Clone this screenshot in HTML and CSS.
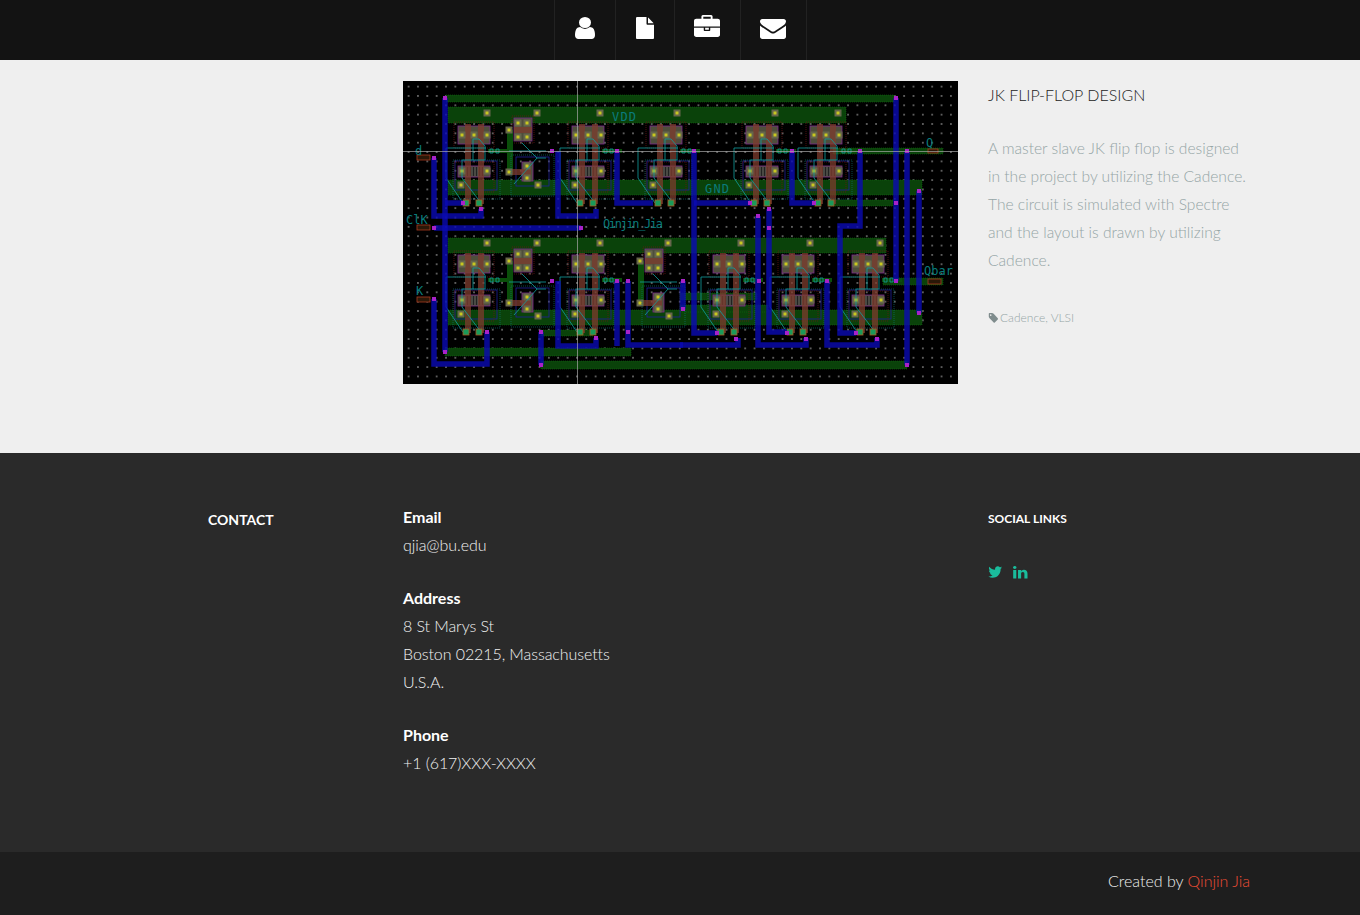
FILE: index.html
```html
<!DOCTYPE html>
<html lang="en">
<head>
    <meta charset="UTF-8">
    <meta name="viewport" content="width=device-width, initial-scale=1.0">
    <title>JK Flip-Flop Design</title>
    <link rel="stylesheet" href="styles.css">
</head>
<body>

    <header class="topbar">
        <nav class="nav">
            <a class="nav-item" href="#"><svg class="nav-icon icon-user" viewBox="256 128 1280 1536" preserveAspectRatio="none"><path d="M1536 1399q0 109-62.5 187t-150.5 78h-854q-88 0-150.5-78t-62.5-187q0-85 8.5-160.5t31.5-152 58.5-131 94-89 134.5-34.5q131 128 313 128t313-128q76 0 134.5 34.5t94 89 58.5 131 31.5 152 8.5 160.5zm-256-887q0 159-112.5 271.5t-271.5 112.5-271.5-112.5-112.5-271.5 112.5-271.5 271.5-112.5 271.5 112.5 112.5 271.5z"/></svg></a>
            <a class="nav-item" href="#"><svg class="nav-icon icon-file" viewBox="128 0 1536 1792" preserveAspectRatio="none"><path d="M1152 512v-472q22 14 36 28l408 408q14 14 28 36h-472zm-128 32q0 40 28 68t68 28h544v1056q0 40-28 68t-68 28h-1344q-40 0-68-28t-28-68v-1600q0-40 28-68t68-28h800v544z"/></svg></a>
            <a class="nav-item" href="#"><svg class="nav-icon icon-briefcase" viewBox="0 0 1792 1536" preserveAspectRatio="none"><path d="M640 256h512v-128h-512v128zm1152 640v480q0 66-47 113t-113 47h-1472q-66 0-113-47t-47-113v-480h672v160q0 26 19 45t45 19h320q26 0 45-19t19-45v-160h672zm-768 0v128h-256v-128h256zm768-480v384h-1792v-384q0-66 47-113t113-47h352v-160q0-40 28-68t68-28h576q40 0 68 28t28 68v160h352q66 0 113 47t47 113z"/></svg></a>
            <a class="nav-item" href="#"><svg class="nav-icon icon-envelope" viewBox="0 256 1792 1408" preserveAspectRatio="none"><path d="M1792 710v794q0 66-47 113t-113 47h-1472q-66 0-113-47t-47-113v-794q44 49 101 87 362 246 497 345 57 42 92.5 65.5t94.5 48 110 24.5h2q51 0 110-24.5t94.5-48 92.5-65.5q170-123 498-345 57-39 100-87zm0-294q0 79-49 151t-122 123q-376 261-468 325-10 7-42.5 30.5t-54 38-52 32.5-57.5 27-50 9h-2q-23 0-50-9t-57.5-27-52-32.5-54-38-42.5-30.5q-91-64-262-182.5t-205-142.5q-62-42-117-115.5t-55-136.5q0-78 41.5-130t118.5-52h1472q65 0 112.5 47t47.5 113z"/></svg></a>
        </nav>
    </header>

    <main class="project">
        <div class="wrap project-grid">
            <svg class="layout" viewBox="0 0 555 303" role="img" aria-label="Cadence layout of the flip-flop">
                <defs>
                    <pattern id="dots" width="9.35" height="9.35" patternUnits="userSpaceOnUse">
                        <rect x="5" y="5" width="1.2" height="1.2" fill="#e0e0e0"/>
                    </pattern>
                    <pattern id="hatch" width="3" height="3" patternUnits="userSpaceOnUse">
                        <rect width="3" height="3" fill="#4a4a44"/>
                        <rect width="1" height="3" fill="#222"/>
                    </pattern>
                    <g id="contact">
                        <rect x="-3.5" y="-3.5" width="7" height="7" fill="#66664c"/>
                        <rect x="-1.5" y="-1.5" width="3" height="3" fill="#c8c820"/>
                    </g>
                    <g id="cell">
                        <rect class="well" x="-4" y="-2" width="40" height="26"/>
                        <rect class="box-blue" x="-3" y="37" width="42" height="29"/>
                        <rect class="well" x="-4" y="38" width="40" height="30"/>
                        <rect class="diff" x="0" y="2" width="32" height="18"/>
                        <rect class="diff" x="0" y="42" width="32" height="11"/>
                        <rect x="7" y="43" width="19" height="9" fill="url(#hatch)"/>
                        <rect class="gate" x="7" y="0" width="6" height="80"/>
                        <rect class="gate" x="20" y="0" width="6" height="80"/>
                        <use href="#contact" x="4" y="11"/>
                        <use href="#contact" x="16" y="11"/>
                        <use href="#contact" x="29" y="11"/>
                        <use href="#contact" x="4" y="47"/>
                        <use href="#contact" x="29" y="47"/>
                        <use href="#contact" x="3" y="61"/>
                        <rect class="rail" x="30" y="25" width="20" height="4"/>
                        <path class="trace" d="M-12 24H28M-12 24V54L5 79M15 15H21L27 22V36H4V54L23 79M15 15V36"/>
                        <path class="trace-dot" d="M-5 36H42V75H-5Z"/>
                        <path class="trace" d="M32 25h3v4h-3zM38 25h3v4h-3z"/>
                        <rect class="pin" x="5" y="76" width="6" height="6"/>
                        <rect class="pin" x="18" y="76" width="6" height="6"/>
                    </g>
                    <g id="tgate">
                        <rect class="well" x="-2" y="-2" width="22" height="27"/>
                        <rect class="box-blue" x="2" y="39" width="33" height="29"/>
                        <rect class="rail" x="-7" y="12" width="6" height="44"/>
                        <rect class="diff" x="0" y="0" width="18" height="23"/>
                        <rect class="diff" x="8" y="44" width="11" height="19"/>
                        <rect class="gate" x="0" y="9" width="18" height="6"/>
                        <rect class="gate" x="-3" y="51" width="20" height="6"/>
                        <use href="#contact" x="4" y="5"/>
                        <use href="#contact" x="13" y="5"/>
                        <use href="#contact" x="4" y="19"/>
                        <use href="#contact" x="13" y="19"/>
                        <use href="#contact" x="13" y="48"/>
                        <use href="#contact" x="13" y="60"/>
                        <use href="#contact" x="-5" y="12"/>
                        <use href="#contact" x="-5" y="54"/>
                        <use href="#contact" x="24" y="67"/>
                        <path class="trace" d="M8 25L23 40L0 66M23 40H32M-5 33H32"/>
                        <path class="trace-dot" d="M-3 37H40V78H-3Z"/>
                    </g>
                </defs>

                <rect width="555" height="303" fill="#000"/>
                <rect width="555" height="303" fill="url(#dots)"/>

                <g class="strips">
                    <rect x="43" y="14" width="448" height="7"/>
                    <rect x="45" y="26" width="398" height="16"/>
                    <rect x="45" y="99" width="474" height="15"/>
                    <rect x="45" y="157" width="438" height="15"/>
                    <rect x="45" y="229" width="474" height="15"/>
                    <rect x="42" y="267" width="186" height="8"/>
                    <rect x="138" y="280" width="366" height="8"/>
                    <rect x="138" y="249" width="52" height="6"/>
                    <rect x="277" y="212" width="77" height="7"/>
                    <rect x="277" y="224" width="88" height="7"/>
                    <rect x="427" y="119" width="63" height="6"/>
                    <rect x="430" y="67" width="110" height="6"/>
                    <rect x="480" y="197" width="60" height="7"/>
                </g>

                <use href="#contact" x="84" y="32"/>
                <use href="#contact" x="134" y="32"/>
                <use href="#contact" x="197" y="32"/>
                <use href="#contact" x="274" y="32"/>
                <use href="#contact" x="372" y="32"/>
                <use href="#contact" x="435" y="32"/>
                <use href="#contact" x="84" y="162"/>
                <use href="#contact" x="134" y="162"/>
                <use href="#contact" x="197" y="162"/>
                <use href="#contact" x="265" y="162"/>
                <use href="#contact" x="338" y="162"/>
                <use href="#contact" x="407" y="162"/>
                <use href="#contact" x="477" y="162"/>

                <use href="#cell" x="55" y="43"/>
                <use href="#cell" x="169" y="43"/>
                <use href="#cell" x="247" y="43"/>
                <use href="#cell" x="343" y="43"/>
                <use href="#cell" x="407" y="43"/>
                <use href="#tgate" x="111" y="37"/>

                <use href="#cell" x="55" y="172"/>
                <use href="#cell" x="169" y="172"/>
                <use href="#cell" x="310" y="172"/>
                <use href="#cell" x="379" y="172"/>
                <use href="#cell" x="449" y="172"/>
                <use href="#tgate" x="111" y="168"/>
                <use href="#tgate" x="242" y="168"/>

                <g class="wires">
                    <path d="M42 17V271"/>
                    <path d="M31 77V135H78V128"/>
                    <path d="M31 147H178"/>
                    <path d="M42 122H60"/>
                    <path d="M155 70V135H193V128"/>
                    <path d="M214 70V122H250"/>
                    <path d="M291 70V252H314"/>
                    <path d="M291 122H347"/>
                    <path d="M389 70V122H411"/>
                    <path d="M457 70V145H437V252H453"/>
                    <path d="M493 17V200"/>
                    <path d="M504 70V284"/>
                    <path d="M516 110V232"/>
                    <path d="M355 135V264H403V257"/>
                    <path d="M366 128V251H384"/>
                    <path d="M280 200V228"/>
                    <path d="M424 200V264H474V257"/>
                    <path d="M277 264H335V257"/>
                    <path d="M31 218V283H84V251"/>
                    <path d="M155 200V265H193V257"/>
                    <path d="M214 200V265"/>
                    <path d="M225 200V264H280"/>
                    <path d="M138 251V284"/>
                </g>

                <g class="vias">
                    <rect x="40" y="15" width="4" height="4"/>
                    <rect x="29" y="75" width="4" height="4"/>
                    <rect x="29" y="145" width="4" height="4"/>
                    <rect x="29" y="216" width="4" height="4"/>
                    <rect x="176" y="145" width="4" height="4"/>
                    <rect x="76" y="126" width="4" height="4"/>
                    <rect x="58" y="120" width="4" height="4"/>
                    <rect x="147" y="68" width="4" height="4"/>
                    <rect x="212" y="68" width="4" height="4"/>
                    <rect x="289" y="68" width="4" height="4"/>
                    <rect x="387" y="68" width="4" height="4"/>
                    <rect x="455" y="68" width="4" height="4"/>
                    <rect x="502" y="68" width="4" height="4"/>
                    <rect x="491" y="15" width="4" height="4"/>
                    <rect x="491" y="120" width="4" height="4"/>
                    <rect x="514" y="108" width="4" height="4"/>
                    <rect x="345" y="120" width="4" height="4"/>
                    <rect x="409" y="120" width="4" height="4"/>
                    <rect x="353" y="133" width="4" height="4"/>
                    <rect x="364" y="126" width="4" height="4"/>
                    <rect x="364" y="145" width="4" height="4"/>
                    <rect x="278" y="226" width="4" height="4"/>
                    <rect x="147" y="198" width="4" height="4"/>
                    <rect x="212" y="198" width="4" height="4"/>
                    <rect x="223" y="198" width="4" height="4"/>
                    <rect x="278" y="198" width="4" height="4"/>
                    <rect x="354" y="198" width="4" height="4"/>
                    <rect x="422" y="198" width="4" height="4"/>
                    <rect x="491" y="198" width="4" height="4"/>
                    <rect x="82" y="249" width="4" height="4"/>
                    <rect x="136" y="249" width="4" height="4"/>
                    <rect x="223" y="249" width="4" height="4"/>
                    <rect x="191" y="255" width="4" height="4"/>
                    <rect x="40" y="269" width="4" height="4"/>
                    <rect x="136" y="282" width="4" height="4"/>
                    <rect x="502" y="282" width="4" height="4"/>
                    <rect x="514" y="230" width="4" height="4"/>
                    <rect x="312" y="250" width="4" height="4"/>
                    <rect x="382" y="250" width="4" height="4"/>
                    <rect x="451" y="250" width="4" height="4"/>
                    <rect x="331" y="256" width="4" height="4"/>
                    <rect x="401" y="256" width="4" height="4"/>
                    <rect x="472" y="256" width="4" height="4"/>
                </g>

                <g class="pins-io">
                    <rect x="14" y="74" width="13" height="5"/>
                    <rect x="14" y="144" width="13" height="5"/>
                    <rect x="14" y="216" width="13" height="5"/>
                    <rect x="525" y="68" width="10" height="4"/>
                    <rect x="525" y="198" width="13" height="5"/>
                </g>

                <g class="labels">
                    <text x="12" y="74" font-size="10">d</text>
                    <text x="3" y="143">ClK</text>
                    <text x="13" y="214" font-size="12">K</text>
                    <text x="209" y="40" textLength="24">VDD</text>
                    <text x="302" y="112" textLength="24">GND</text>
                    <text x="200" y="147" textLength="60">Qinjin_Jia</text>
                    <text x="523" y="66" font-size="12">Q</text>
                    <text x="521" y="194" textLength="29">Qbar</text>
                </g>

                <path class="crosshair" d="M0 70.5H555M174.5 0V303"/>
            </svg>

            <aside class="project-info">
                <h2 class="project-title">JK FLIP-FLOP DESIGN</h2>
                <p class="project-text">A master slave JK flip flop is designed in the project by utilizing the Cadence. The circuit is simulated with Spectre and the layout is drawn by utilizing Cadence.</p>
                <p class="project-tags"><svg class="icon-tag" viewBox="0 128 1643 1536" preserveAspectRatio="none"><path d="M576 448q0-53-37.5-90.5t-90.5-37.5-90.5 37.5-37.5 90.5 37.5 90.5 90.5 37.5 90.5-37.5 37.5-90.5zm1067 576q0 53-37 90l-491 492q-39 37-91 37-53 0-90-37l-715-716q-38-37-64.5-101t-26.5-117v-416q0-52 38-90t90-38h416q53 0 117 26.5t102 64.5l715 714q37 39 37 91z"/></svg>Cadence, VLSI</p>
            </aside>
        </div>
    </main>

    <footer class="contact">
        <div class="wrap contact-grid">
            <h3 class="contact-title">CONTACT</h3>
            <div class="contact-details">
                <div class="contact-block">
                    <strong>Email</strong>
                    <span>qjia@bu.edu</span>
                </div>
                <div class="contact-block">
                    <strong>Address</strong>
                    <span>8 St Marys St</span>
                    <span>Boston 02215, Massachusetts</span>
                    <span>U.S.A.</span>
                </div>
                <div class="contact-block">
                    <strong>Phone</strong>
                    <span>+1 (617)XXX-XXXX</span>
                </div>
            </div>
            <div class="social">
                <h4 class="social-title">SOCIAL LINKS</h4>
                <div class="social-links">
                    <a href="#"><svg class="icon-twitter" viewBox="64 230 1620 1340" preserveAspectRatio="none"><path d="M1684 408q-67 98-162 167 1 14 1 42 0 130-38 259.5t-115.5 248.5-184.5 210.5-258 146-323 54.5q-271 0-496-145 35 4 78 4 225 0 401-138-105-2-188-64.5t-114-159.5q33 5 61 5 43 0 85-11-112-23-185.5-111.5t-73.5-205.5v-4q68 38 146 41-66-44-105-115t-39-154q0-88 44-163 121 149 294.5 238.5t371.5 99.5q-8-38-8-74 0-134 94.5-228.5t228.5-94.5q140 0 236 102 109-21 205-78-37 115-142 178 100-11 200-54z"/></svg></a>
                    <a href="#"><svg class="icon-linkedin" viewBox="128 150 1536 1466" preserveAspectRatio="none"><path d="M477 625v991h-330v-991h330zm21-306q1 73-50.5 122t-135.5 49h-2q-82 0-132-49t-50-122q0-74 51.5-122.5t134.5-48.5 133 48.5 51 122.5zm1166 729v568h-329v-530q0-105-40.5-164.5t-126.5-59.5q-63 0-105.5 34.5t-63.5 85.5q-11 30-11 81v553h-329q2-399 2-647t-1-296l-1-48h329v144h-2q20-32 41-56t56.5-52 87-43.5 114.5-15.5q171 0 275 113.5t104 332.5z"/></svg></a>
                </div>
            </div>
        </div>
    </footer>

    <div class="credits">
        <div class="wrap credits-line">Created by <a href="#">Qinjin Jia</a></div>
    </div>

</body>
</html>
```

FILE: styles.css
```css
body {
    font-family: Lato, "Open Sans", sans-serif;
    font-weight: 300;
    font-size: 16px;
    line-height: 28px;
    background-color: #efefef;
    margin: 0;
}
a {
    text-decoration: none;
}
.wrap {
    width: 1140px;
    margin: 0 auto;
}

/* top bar */
.topbar {
    height: 60px;
    background-color: #131313;
    display: flex;
    justify-content: center;
}
.nav {
    display: flex;
    margin-left: 1px;
    border-right: 1px solid #222;
}
.nav-item {
    display: flex;
    align-items: flex-start;
    padding: 0 20px;
    border-left: 1px solid #222;
}
.nav-icon {
    fill: #fff;
    display: block;
}
.icon-user {
    width: 20px;
    height: 22px;
    margin-top: 17px;
}
.icon-file {
    width: 18px;
    height: 22px;
    margin: 17px 0.5px 0 -0.5px;
}
.icon-briefcase {
    width: 26px;
    height: 22px;
    margin: 15px 0 0 -1px;
}
.icon-envelope {
    width: 26px;
    height: 20px;
    margin: 19px 0 0 -1px;
}

/* project */
.project {
    padding: 21px 0 69px;
}
.project-grid {
    display: grid;
    grid-template-columns: 555px 262px;
    column-gap: 30px;
    padding-left: 293px;
    box-sizing: border-box;
}
.layout {
    display: block;
    width: 555px;
    height: 303px;
}
.project-title {
    font-size: 16px;
    font-weight: 300;
    line-height: 28px;
    color: #222;
    margin: 0 0 25px;
}
.project-text {
    font-size: 15.6px;
    color: #95a5a6;
    margin: 0 0 34px;
}
.project-tags {
    font-size: 12px;
    line-height: 20px;
    color: #95a5a6;
    margin: 0;
    display: flex;
    align-items: center;
}
.icon-tag {
    width: 10px;
    height: 10px;
    fill: #7f8c8d;
    margin-right: 2px;
}

/* drawing layers of the layout picture */
.strips rect {
    fill: #0a420a;
    stroke: #0d6a0d;
    stroke-width: 0.6;
    stroke-dasharray: 1 1;
}
.well {
    fill: none;
    stroke: #6a1414;
    stroke-width: 0.7;
    stroke-dasharray: 1 1;
}
.box-blue {
    fill: none;
    stroke: #20209a;
    stroke-width: 0.8;
}
.diff {
    fill: #4e4e3c;
    stroke: #7a2a8a;
    stroke-width: 0.8;
}
.gate {
    fill: #7e3c2e;
    fill-opacity: 0.75;
}
.rail {
    fill: #0a4e0a;
}
.pin {
    fill: #1a9a5a;
    stroke: #a85a20;
    stroke-width: 0.8;
}
.trace {
    fill: none;
    stroke: #10a0a0;
    stroke-width: 0.8;
}
.trace-dot {
    fill: none;
    stroke: #0c7a7a;
    stroke-width: 0.6;
    stroke-dasharray: 1 1;
}
.wires path {
    fill: none;
    stroke: #0a0ab4;
    stroke-width: 5.5;
    stroke-opacity: 0.8;
}
.vias rect {
    fill: #a822c8;
}
.pins-io rect {
    fill: #2a1808;
    stroke: #a83a20;
    stroke-width: 0.8;
}
.labels text {
    font-family: "DejaVu Sans Mono", monospace;
    font-size: 12px;
    font-weight: 400;
    fill: #0a7c7c;
}
.crosshair {
    stroke: #a8a8a8;
    stroke-width: 1;
    stroke-opacity: 0.7;
}

/* contact footer */
.contact {
    height: 399px;
    background-color: #2a2a2a;
    color: #f2f2f2;
    box-sizing: border-box;
    padding-top: 50px;
}
.contact-grid {
    display: grid;
    grid-template-columns: 165px 555px 262px;
    column-gap: 30px;
    padding-left: 98px;
    box-sizing: border-box;
}
.contact-title {
    font-size: 14px;
    font-weight: 700;
    line-height: 28px;
    color: #fff;
    margin: 3px 0 0;
}
.contact-block {
    display: flex;
    flex-direction: column;
    margin-bottom: 25px;
    letter-spacing: -0.08px;
}
.contact-block strong {
    font-size: 16px;
    font-weight: 700;
    color: #fff;
    letter-spacing: 0;
}
.social-title {
    font-size: 12px;
    font-weight: 700;
    line-height: 28px;
    color: #fff;
    margin: 2px 0 0;
}
.social-links {
    display: flex;
    align-items: flex-start;
    gap: 11px;
    margin-top: 33px;
}
.social-links a {
    display: block;
    height: 13px;
}
.social-links svg {
    display: block;
    fill: #1abc9c;
}
.icon-twitter {
    width: 14px;
    height: 12px;
}
.icon-linkedin {
    width: 14.5px;
    height: 12.5px;
}

/* credits */
.credits {
    height: 63px;
    background-color: #1e1e1e;
    color: #f0f0f0;
    box-sizing: border-box;
    padding-top: 15px;
}
.credits-line {
    text-align: right;
}
.credits-line a {
    color: #ee4d35;
}
```
